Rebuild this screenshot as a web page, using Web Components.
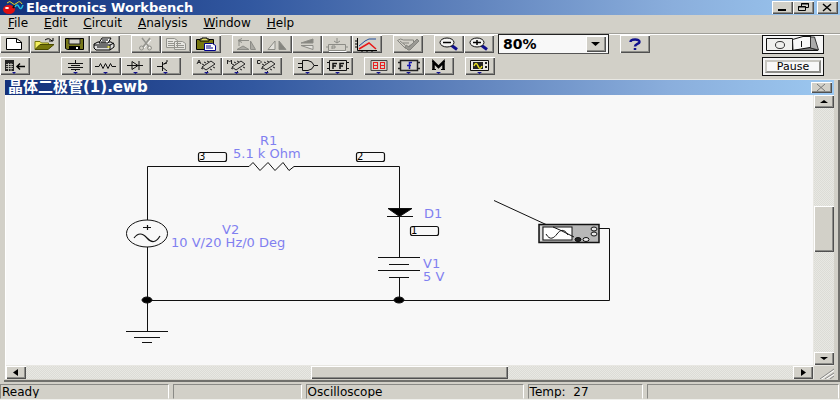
<!DOCTYPE html>
<html lang="en">
<head>
<meta charset="utf-8">
<title>Electronics Workbench</title>
<style>
html, body { margin: 0; height: 100%; }
body { font: 12px/14px "DejaVu Sans", "Noto Sans CJK SC", sans-serif; color: #000; background: #d2d0c8; --face: #d2d0c8; --bevel: inset 1px 1px #fff, inset -1px -1px #505050, inset -2px -2px #8c8c88; --title: linear-gradient(90deg, #12307a, #3258a0 30%, #5f82bc 55%, #8aaedc 80%, #9cc8f0); }
</style>
</head>
<body>
<app-window>
  <title-bar slot="title" caption="Electronics Workbench"></title-bar>
  <menu-bar slot="menu" items="File,Edit,Circuit,Analysis,Window,Help"></menu-bar>

  <tool-row slot="tools" label="Standard">
    <tool-group>
      <tool-button label="New"><svg viewBox="0 0 30 18"><path d="M6.500 3.500h10l5 3.500v7.500h-15z" fill="#fff" stroke="#000"/><path d="M16.500 3.500v4H21" fill="none" stroke="#000"/></svg></tool-button>
      <tool-button label="Open"><svg viewBox="0 0 30 18"><path d="M5 14V6.500h5l1.500 1.500h7V10" fill="#f4f060" stroke="#77770a"/><path d="M5 14.500l5-5h14l-6 5z" fill="#77770a" stroke="#4a4a00"/><path d="M15 5q4-3 7 1m1-3v3h-4" fill="none" stroke="#000"/></svg></tool-button>
      <tool-button label="Save"><svg viewBox="0 0 30 18"><path d="M5.500 3.500h18v11h-16l-2-1z" fill="#77771a" stroke="#000"/><path d="M9 4h11v5H9z" fill="#d2d0c8" stroke="#222"/><path d="M9 11h11v4H9z" fill="#000"/><path d="M16 12h2v2h-2z" fill="#fff"/></svg></tool-button>
      <tool-button label="Print"><svg viewBox="0 0 30 18"><path d="M4 9l4-2h13l3 2v3l-4 3H6l-2-2z" fill="#ddd" stroke="#000"/><path d="M9 8l3-5h9l-3 5z" fill="#fff" stroke="#000"/><path d="M12 5h6m-7 2h5M4 10h16l4-2M7 12h11m2 3v-5" fill="none" stroke="#000"/><path d="M17 12h3" stroke="#d8d000"/></svg></tool-button>
    </tool-group>
    <tool-group>
      <tool-button label="Cut"><svg viewBox="0 0 30 18" fill="none" stroke="#94948e"><g stroke="#fff" transform="translate(1 1)"><path d="M11 4l7 8M19 4l-7 8"/></g><path d="M11 3l7 9M19 3l-7 9" stroke-width="1.500"/><circle cx="10.500" cy="13" r="2"/><circle cx="18.500" cy="13" r="2"/></svg></tool-button>
      <tool-button label="Copy"><svg viewBox="0 0 30 18" stroke="#94948e" fill="#e6e5e0"><path d="M5.500 3.500h8l3 2v7h-11zM13.500 6.500h8l3 2v6h-11z"/><path d="M7 6.500h5m-5 2h6m-6 2h6m2-2h5m-5 2h8m-8 2h8"/></svg></tool-button>
      <tool-button label="Paste"><svg viewBox="0 0 30 18"><path d="M5.500 4.500h17v10h-17z" fill="#77770f" stroke="#000"/><path d="M9 6V4h2V3h5v1h2v2z" fill="#e0dc70" stroke="#000"/><path d="M13.500 8.500h8l3 2v5h-11z" fill="#fff" stroke="#00008c"/><path d="M15 11h5m-5 2h7" stroke="#00008c"/></svg></tool-button>
    </tool-group>
    <tool-group>
      <tool-button label="Rotate"><svg viewBox="0 0 30 18" fill="none" stroke="#8c8c86"><path d="M5 14.500h12l-6-3.500zM18.500 14V6l5 8.500h-5" fill="#aaa9a3"/><path d="M17 5.500H7m3-2L6 5.500l4 2M7 6v5"/></svg></tool-button>
      <tool-button label="Flip Horizontal"><svg viewBox="0 0 30 18" fill="#e2e1dc" stroke="#8c8c86"><path d="M6 14.500h7V6z"/><path d="M17 14.500V6l7 8.500z" fill="#85857f"/></svg></tool-button>
      <tool-button label="Flip Vertical"><svg viewBox="0 0 30 18" fill="#85857f" stroke="#8c8c86"><path d="M9 8h12V4z"/><path d="M9 10.500h12v4z" fill="#e2e1dc"/></svg></tool-button>
      <tool-button label="Create Subcircuit"><svg viewBox="0 0 30 18" fill="none" stroke="#8c8c86"><path d="M6.500 9.500h17v6h-17zM4 12h2m18 0h2M15 3v5m-3-2l3 2 3-2M10 14v-3h3v2h-3"/><path d="M7 16.500h17.500" stroke="#fff"/></svg></tool-button>
      <tool-button label="Display Graphs"><svg viewBox="0 0 30 18" fill="none"><path d="M5.500 3v12.500H25M3 6h2m-2 3h2m-2 3h2m5 4v1m5-1v1m5-1v1" stroke="#000"/><path d="M7 11l6-5 4-2h7" stroke="#224e9c"/><path d="M7 14l10-6 7 6" stroke="#e81818" stroke-width="1.500"/></svg></tool-button>
    </tool-group>
    <tool-group>
      <tool-button label="Component Properties"><svg viewBox="0 0 30 18" fill="#d2d0c8" stroke="#85857f"><path d="M4.500 5.500l3-1.500 3 1h10v3l-8 5.500z"/><path d="M7 6l5 4M10 8h6" fill="none"/><path d="M24 4l-8 8-3-2-1 2 3 3h2l9-9z" fill="#9a9993"/></svg></tool-button>
    </tool-group>
    <tool-group>
      <tool-button label="Zoom Out"><svg viewBox="0 0 30 18" fill="#f4f4f2"><path d="M17 10l6 4.500" stroke="#11118c" stroke-width="3"/><ellipse cx="13" cy="7.500" rx="7" ry="4.500" stroke="#111"/><path d="M9 7.500h8" stroke="#000" stroke-width="1.500"/></svg></tool-button>
      <tool-button label="Zoom In"><svg viewBox="0 0 30 18" fill="#f4f4f2"><path d="M17 10l6 4.500" stroke="#11118c" stroke-width="3"/><ellipse cx="13" cy="7.500" rx="7" ry="4.500" stroke="#111"/><path d="M9 7.500h8M13 5v5" stroke="#000" stroke-width="1.500"/></svg></tool-button>
    </tool-group>
    <zoom-select></zoom-select>
    <tool-group>
      <tool-button label="Help"><svg viewBox="0 0 30 18" fill="none" stroke="#11118c" stroke-width="2.500"><path d="M10.500 7c0-3.500 9.500-3.500 9 0 0 2-4.500 2-4.500 4.500M15 13v2"/></svg></tool-button>
    </tool-group>
  </tool-row>

  <tool-row slot="tools" label="Parts">
    <tool-group class="favorites">
      <tool-button label="Favorites"><svg viewBox="0 0 30 18"><path d="M5 3h9v11H5z" fill="#222"/><path d="M6 7.500h7M6 9.500h7M6 11.500h7M8.500 6v8M11 6v8" stroke="#d2d0c8" stroke-width=".8"/><path d="M17 9.500h8m-5-3l-3 3 3 3" fill="none" stroke="#000" stroke-width="1.500"/><path d="M12 15h4l-2 2z" fill="#11118c"/></svg></tool-button>
    </tool-group>
    <row-spacer></row-spacer>
    <tool-group>
      <tool-button label="Sources"><svg viewBox="0 0 30 18" fill="none" stroke="#111"><path d="M7 6.500h15M10 8.500h9M7 10.500h15M10 12.500h9M14.500 3v3m0 6v2"/><path d="M12 15h5l-2.500 2z" fill="#11118c" stroke="none"/></svg></tool-button>
      <tool-button label="Basic"><svg viewBox="0 0 30 18" fill="none" stroke="#111"><path d="M4 9.500h4l1.500-3 2.500 5 2.500-5 2.500 5 2.500-5 1.500 3h4"/><path d="M12 15h5l-2.500 2z" fill="#11118c" stroke="none"/></svg></tool-button>
      <tool-button label="Diodes"><svg viewBox="0 0 30 18" fill="none" stroke="#111"><path d="M6 8.500h16M11 4.500v8l6-4zM18 4v9"/><path d="M12 15h5l-2.500 2z" fill="#11118c" stroke="none"/></svg></tool-button>
      <tool-button label="Transistors"><svg viewBox="0 0 30 18" fill="none" stroke="#111"><path d="M6 9.500h5M11.500 5v9M11 8l5-3V3M11 10l5 4M13 7l3-1"/><path d="M12 15h5l-2.500 2z" fill="#11118c" stroke="none"/></svg></tool-button>
    </tool-group>
    <tool-group>
      <tool-button label="Analog ICs"><svg viewBox="0 0 30 18" fill="none" stroke="#222"><path d="M5 7l2-4 2 4M6 5.500h2"/><path d="M10 10l9-6 4 3-9 6zM9 11l2 1m1-4l-2-1m4-1l-2-1m5 0l-2-1m6 6l2 1m-5 1l2 1m-5 1l1 1"/><path d="M12 15h5l-2.500 2z" fill="#11118c" stroke="none"/></svg></tool-button>
      <tool-button label="Mixed ICs"><svg viewBox="0 0 30 18" fill="none" stroke="#222"><path d="M5.500 7V3l2 2 2-2v4"/><path d="M10 10l9-6 4 3-9 6zM9 11l2 1m1-4l-2-1m4-1l-2-1m5 0l-2-1m6 6l2 1m-5 1l2 1m-5 1l1 1"/><path d="M12 15h5l-2.500 2z" fill="#11118c" stroke="none"/></svg></tool-button>
      <tool-button label="Digital ICs"><svg viewBox="0 0 30 18" fill="none" stroke="#222"><path d="M5.500 3.500H8l1 1v1l-1 1H5.500z"/><path d="M10 10l9-6 4 3-9 6zM9 11l2 1m1-4l-2-1m4-1l-2-1m5 0l-2-1m6 6l2 1m-5 1l2 1m-5 1l1 1"/><path d="M12 15h5l-2.500 2z" fill="#11118c" stroke="none"/></svg></tool-button>
    </tool-group>
    <tool-group>
      <tool-button label="Logic Gates"><svg viewBox="0 0 30 18" fill="none" stroke="#111"><path d="M9.500 3.500H15q5 1 6 5-1 4-6 5H9.500zM5 6.500h5M5 10.500h5M21 8.500h4"/><path d="M12 15h5l-2.500 2z" fill="#11118c" stroke="none"/></svg></tool-button>
      <tool-button label="Digital"><svg viewBox="0 0 30 18" fill="none" stroke="#111"><path d="M6.500 3.500h17v10h-17zM4 5.500h3M4 11.500h3M23 5.500h3M23 11.500h3"/><path d="M10 12V6.500h4M10 9h3M17 12V6.500h4M17 9h3" stroke-width="1.500"/><path d="M12 15h5l-2.500 2z" fill="#11118c" stroke="none"/></svg></tool-button>
    </tool-group>
    <tool-group>
      <tool-button label="Indicators"><svg viewBox="0 0 30 18" fill="none"><path d="M7 3.500h16v10H7zM9 14v-1m3 1v-1m4 1v-1m4 1v-1" stroke="#444"/><path d="M9 5.500h5m2 0h5M9 8.500h5m2 0h5M9 11.500h5m2 0h5M9.500 6v5m4-5v5m3-5v5m4-5v5" stroke="#e82020"/><path d="M12 15h5l-2.500 2z" fill="#11118c"/></svg></tool-button>
      <tool-button label="Controls"><svg viewBox="0 0 30 18" fill="none"><path d="M6.500 3.500h17v10h-17zM4 5.500h3M4 11.500h3M23 5.500h3M23 11.500h3" stroke="#222" stroke-width="1.500"/><path d="M18 5.500h-2.500V12M13 8.500h4" stroke="#1a1ab0" stroke-width="1.500"/><path d="M12 15h5l-2.500 2z" fill="#11118c"/></svg></tool-button>
      <tool-button label="Miscellaneous"><svg viewBox="0 0 30 18" fill="none"><path d="M9.500 13V5l5 5 5-5v8" stroke="#000" stroke-width="2.500"/><path d="M8 12.500h4m5 0h4M8 4.500h2m9 0h2" stroke="#000"/><path d="M12 15h5l-2.500 2z" fill="#11118c"/></svg></tool-button>
    </tool-group>
    <tool-group>
      <tool-button label="Instruments"><svg viewBox="0 0 30 18"><path d="M5.500 3.500h18v10h-18z" fill="#e8e7e2" stroke="#111"/><path d="M8 5h10v7H8z" fill="#222"/><path d="M9 9q2-5 4 0t4 0" fill="none" stroke="#e8e020" stroke-width="1.500"/><path d="M20 5h2v2h-2zM20 9h2v2h-2z" fill="#222"/><path d="M12 15h5l-2.500 2z" fill="#11118c"/></svg></tool-button>
    </tool-group>
  </tool-row>

  <simulation-switch slot="simulation"></simulation-switch>

  <document-window slot="document" caption="晶体二极管(1).ewb">
    <circuit-diagram></circuit-diagram>
  </document-window>

  <status-bar slot="status">
    <status-cell style="flex:169">Ready</status-cell>
    <status-cell style="flex:128"></status-cell>
    <status-cell style="flex:219">Oscilloscope</status-cell>
    <status-cell style="flex:114">Temp:&nbsp; 27</status-cell>
    <status-cell style="flex:193"></status-cell>
  </status-bar>
</app-window>

<script>
const define = (name, render) => customElements.define(name, class extends HTMLElement {
  connectedCallback() {
    if (!this.shadowRoot) this.attachShadow({ mode: "open" }).innerHTML = render(this);
  }
});

define("app-window", () => `
<style>
:host { display: flex; flex-direction: column; min-height: 100vh; background: var(--face); }
.tools { display: flex; justify-content: space-between; align-items: flex-start; border-top: 1px solid #a09f99; box-shadow: inset 0 1px #fff; padding: 0 16px 3px 0; }
.rows { display: flex; flex-direction: column; gap: 2px; }
slot[name=document]::slotted(*) { flex: 1; }
.sim { padding-top: 1px; }
</style>
<slot name="title"></slot><slot name="menu"></slot>
<div class="tools"><div class="rows"><slot name="tools"></slot></div><div class="sim"><slot name="simulation"></slot></div></div>
<slot name="document"></slot><slot name="status"></slot>`);

define("title-bar", el => `
<style>
:host { display: flex; align-items: center; height: 15px; padding: 0 2px; background: var(--title); color: #fff; }
.logo { width: 24px; height: 15px; flex: none; }
h1 { margin: 0; font-size: 13px; line-height: 15px; font-weight: bold; flex: 1; }
button { width: 21px; height: 13px; padding: 0; border: 0; background: var(--face); box-shadow: var(--bevel); }
button:last-child { margin-left: 3px; }
svg { display: block; }
</style>
<svg class="logo" viewBox="2 0 24 15"><ellipse cx="9" cy="9.500" rx="6" ry="4.500" fill="#e01010"/><ellipse cx="7" cy="8" rx="2" ry="1" fill="#fff"/><path d="M13 8l2-3" stroke="#111" stroke-width="2"/><path d="M7 3q3-3 5 0t5 0 5 1" stroke="#e8dc20" fill="none"/><path d="M15 7q2-4 4 0t4-2" stroke="#20c0e0" fill="none" stroke-width="1.500"/></svg>
<h1>${el.getAttribute("caption")}</h1>
<button aria-label="Minimize"><svg viewBox="0 0 21 13"><path d="M6 9h8" stroke="#000" stroke-width="2"/></svg></button>
<button aria-label="Restore"><svg viewBox="0 0 21 13" fill="none" stroke="#000"><path d="M8.500 5V2.500h7v4H13M5.500 5.500h7v4h-7zM5 6h8M8 3h8"/></svg></button>
<button aria-label="Close"><svg viewBox="0 0 21 13"><path d="M6 3l8 7M14 3l-8 7" stroke="#000" stroke-width="1.500"/></svg></button>`);

define("menu-bar", el => `
<style>
:host { display: flex; gap: 16px; height: 18px; padding: 0 8px; align-items: flex-start; background: var(--face); }
button { all: unset; font: inherit; line-height: 16px; }
</style>
${el.getAttribute("items").split(",").map(t => `<button><u>${t[0]}</u>${t.slice(1)}</button>`).join("")}`);

define("tool-row", () => `
<style>:host { display: flex; align-items: center; gap: 11px; height: 20px; }</style><slot></slot>`);

define("row-spacer", () => `<style>:host { display: block; width: 9px; }</style>`);

define("tool-group", () => `<style>:host { display: flex; }</style><slot></slot>`);

define("tool-button", el => `
<style>
:host { display: block; }
button { display: block; width: 30px; height: 18px; padding: 0; border: 0; background: var(--face); box-shadow: var(--bevel); }
::slotted(svg) { display: block; width: 30px; height: 18px; }
</style>
<button aria-label="${el.getAttribute("label")}"><slot></slot></button>`);

define("zoom-select", () => `
<style>
:host { display: block; position: relative; margin-left: -7px; }
select { appearance: none; display: block; width: 111px; height: 20px; padding: 0 24px 0 4px; background: #f8f8f8; border: 1px solid; border-color: #222 #222 #555 #222; border-radius: 0; outline: 0; font: bold 14px/16px "DejaVu Sans", sans-serif; color: #000; }
svg { position: absolute; right: 3px; top: 2px; width: 20px; height: 16px; background: var(--face); box-shadow: var(--bevel); pointer-events: none; }
</style>
<select aria-label="Zoom"><option>50%</option><option selected>80%</option><option>100%</option></select>
<svg viewBox="0 0 20 16"><path d="M5 6h9l-4.500 4z"/></svg>`);

define("simulation-switch", () => `
<style>
:host { display: flex; flex-direction: column; gap: 3px; }
button { display: block; box-sizing: border-box; width: 62px; height: 19px; padding: 0; border: 1px solid #111; background: #f5f5f5; }
.pause { font: 11px/11px "DejaVu Sans", sans-serif; color: #000; padding: 2px; }
.pause span { display: block; border: 2px solid; border-color: #c8c7c1 #8c8c88 #8c8c88 #c8c7c1; line-height: 9px; background: #f8f8f8; }
svg { display: block; width: 60px; height: 17px; }
</style>
<button aria-label="Activate simulation"><svg viewBox="0 0 60 17"><path d="M3.500 2.500h26v12h-26z" fill="#f0f0ee" stroke="#111"/><ellipse cx="17" cy="9" rx="4.500" ry="3.500" fill="none" stroke="#333"/><path d="M29.500 3.500L40 .5h8v12l-18 2z" fill="#f8f8f8" stroke="#111"/><path d="M29 14.500l18-3 8 3z" fill="#777" stroke="#111"/><path d="M47.500 1h4l4 13-8-2z" fill="#aaa" stroke="#333"/><path d="M38.500 5v6" stroke="#111"/></svg></button>
<button class="pause"><span>Pause</span></button>`);

define("scroll-bar", el => {
  const v = el.hasAttribute("vertical");
  const arrows = v ? ["M6 8h8l-4-3z", "M6 5h8l-4 3z"] : ["M7 6.500l5-3.500v7z", "M13 6.500L8 3v7z"];
  return `
<style>
:host { display: flex; flex-direction: ${v ? "column" : "row"}; background: repeating-conic-gradient(#dcdcd6 0 25%, #e8e8e3 0 50%) 0 0 / 2px 2px; }
button, i { display: block; box-sizing: border-box; padding: 0; border: 0; background: var(--face); box-shadow: var(--bevel); }
button { width: 20px; height: 13px; flex: none; }
svg { display: block; }
.before { flex: ${v ? 98 : 285}; } .thumb { flex: ${v ? 46 : 198}; } .after { flex: ${v ? 100 : 285}; }
</style>
<button aria-label="${v ? "Up" : "Left"}"><svg viewBox="0 0 20 13"><path d="${arrows[0]}"/></svg></button>
<span class="before"></span><i class="thumb"></i><span class="after"></span>
<button aria-label="${v ? "Down" : "Right"}"><svg viewBox="0 0 20 13"><path d="${arrows[1]}"/></svg></button>`;
});

define("document-window", el => `
<style>
:host { display: flex; flex-direction: column; box-sizing: border-box; padding: 0 6px 3px 5px; background: var(--face); box-shadow: inset 4px 0 var(--face), inset 0 1px #e8e7e2, inset -2px 0 #70706c, inset 0 -2px #70706c; }
header { display: flex; align-items: center; height: 15px; padding: 0 2px 0 3px; background: var(--title); color: #fff; margin-top: 1px; }
h2 { margin: 0; flex: 1; font: bold 15px/15px "DejaVu Sans", "Noto Sans CJK SC", sans-serif; }
header button { width: 21px; height: 11px; padding: 0; border: 0; background: var(--face); box-shadow: var(--bevel); }
svg { display: block; }
.body { flex: 1; display: grid; grid-template: 1fr 13px / 1fr 20px; gap: 1px; border-left: 1px solid #fff; background: #e8e7e2; }
.view { background: #f8f8f8; overflow: hidden; min-width: 0; }
.grip { width: 20px; height: 13px; background: var(--face); }
</style>
<header><h2>${el.getAttribute("caption")}</h2><button aria-label="Close document"><svg viewBox="0 0 21 11"><path d="M6 2l8 7M14 2l-8 7" stroke="#777"/></svg></button></header>
<div class="body">
  <div class="view"><slot></slot></div>
  <scroll-bar vertical></scroll-bar>
  <scroll-bar></scroll-bar>
  <svg class="grip" viewBox="0 0 20 13"><path d="M6 13L20 3M11 13l9-6M16 13l4-3" stroke="#888"/><path d="M7 13.500L20 4.500M12 13.500l8-5" stroke="#fff"/></svg>
</div>`);

/* Drawing coordinates are those of the sheet, with its corner at (6, 95). */
define("circuit-diagram", () => `
<style>
:host { display: block; height: 269px; overflow: hidden; }
svg { display: block; }
.label { font: 13px "DejaVu Sans", sans-serif; fill: #8080f0; }
.node { font: 10px "DejaVu Sans", sans-serif; fill: #000; }
</style>
<svg width="807" height="269" viewBox="6 95 807 269" fill="none" stroke="#111" role="img" aria-label="Diode circuit">
  <path d="M147.500 220v-53.500H249l4-4 7 8 8-8 7 8 8-8 6 8 5-4H399.500v42M399.500 217v41M399.500 278v22M147.500 247v84M147 300.500H609.500V228.500H599"/>
  <ellipse cx="147" cy="233.500" rx="20.500" ry="13.500"/>
  <path d="M143 227.500h8M147.500 225v5M134 238q6-8 13 0t13-2" stroke-width="1.200"/>
  <path d="M126 331.500h42M134 337.500h26M142 342.500h10"/>
  <path d="M388 208.500h24l-12.500 8z" fill="#000"/><path d="M387 216.500h26"/>
  <path d="M378 257.500h42M389 264.500h20M378 270.500h42M389 277.500h20"/>
  <g fill="#000"><ellipse cx="147" cy="300" rx="5" ry="3"/><ellipse cx="399" cy="300" rx="5" ry="3"/></g>
  <g fill="#f8f8f8" stroke-width="1.200"><rect x="198.500" y="152.500" width="28" height="9" rx="2"/><rect x="356.500" y="152.500" width="28" height="9" rx="2"/><rect x="410.500" y="226.500" width="28" height="9" rx="2"/></g>
  <path d="M494 200.500l52 24"/>
  <rect x="539" y="224.500" width="60" height="18" fill="#b8b8b8" stroke-width="1.500"/>
  <path d="M541 226v15" stroke="#fff"/>
  <rect x="543" y="227" width="29" height="13" fill="#fff"/>
  <path d="M546 234c4 7 8 4 11 0s7-6 11 1M553 227l7 3 14 7"/>
  <g fill="#e8e8e8"><ellipse cx="594" cy="229" rx="3" ry="2"/><ellipse cx="594" cy="234" rx="3" ry="2"/><ellipse cx="586" cy="239.500" rx="3" ry="2"/><ellipse cx="578" cy="239.500" rx="3" ry="2" fill="#222"/></g>
  <g stroke="none">
    <g class="label">
      <text x="260" y="145">R1</text><text x="233" y="158">5.1 k Ohm</text>
      <text x="222" y="234">V2</text><text x="171" y="247">10 V/20 Hz/0 Deg</text>
      <text x="424" y="218">D1</text><text x="423" y="268">V1</text><text x="423" y="281">5 V</text>
    </g>
    <g class="node"><text x="199" y="160">3</text><text x="357" y="160">2</text><text x="411" y="234">1</text></g>
  </g>
</svg>`);

define("status-bar", () => `
<style>:host { display: flex; gap: 4px; height: 18px; box-sizing: border-box; padding: 2px 1px 0 0; background: var(--face); border-bottom: 1px solid #f0f0ec; }</style><slot></slot>`);

define("status-cell", () => `
<style>:host { display: block; box-sizing: border-box; min-width: 0; padding-left: 1px; border: 1px solid; border-color: #8a8a86 #fff var(--face) #8a8a86; line-height: 14px; white-space: nowrap; overflow: hidden; }</style><slot></slot>`);
</script>
</body>
</html>
